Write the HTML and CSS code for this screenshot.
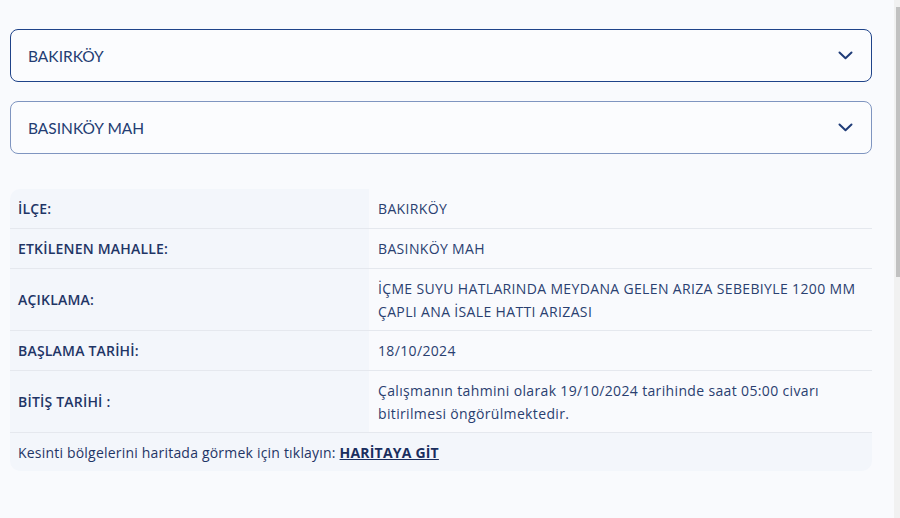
FILE: index.html
```html
<!DOCTYPE html>
<html lang="tr">
<head>
<meta charset="utf-8">
<link rel="stylesheet" href="styles.css">
</head>
<body>
<div class="page">
  <div class="select select-first">
    <span class="select-text">BAKIRKÖY</span>
    <svg class="chev" width="15" height="9" viewBox="0 0 15 9"><path d="M1.5 1.5 L7.5 7.2 L13.5 1.5" fill="none" stroke="#1f3c78" stroke-width="2" stroke-linecap="round" stroke-linejoin="round"/></svg>
  </div>
  <div class="select select-second">
    <span class="select-text">BASINKÖY MAH</span>
    <svg class="chev" width="15" height="9" viewBox="0 0 15 9"><path d="M1.5 1.5 L7.5 7.2 L13.5 1.5" fill="none" stroke="#1f3c78" stroke-width="2" stroke-linecap="round" stroke-linejoin="round"/></svg>
  </div>

  <div class="info">
    <div class="row short">
      <div class="label">İLÇE:</div>
      <div class="value">BAKIRKÖY</div>
    </div>
    <div class="row short">
      <div class="label">ETKİLENEN MAHALLE:</div>
      <div class="value">BASINKÖY MAH</div>
    </div>
    <div class="row tall">
      <div class="label">AÇIKLAMA:</div>
      <div class="value">İÇME SUYU HATLARINDA MEYDANA GELEN ARIZA SEBEBIYLE 1200 MM ÇAPLI ANA İSALE HATTI ARIZASI</div>
    </div>
    <div class="row short">
      <div class="label">BAŞLAMA TARİHİ:</div>
      <div class="value">18/10/2024</div>
    </div>
    <div class="row tall">
      <div class="label">BİTİŞ TARİHİ :</div>
      <div class="value">Çalışmanın tahmini olarak 19/10/2024 tarihinde saat 05:00 civarı bitirilmesi öngörülmektedir.</div>
    </div>
    <div class="footer">Kesinti bölgelerini haritada görmek için tıklayın: <a class="map-link" href="#">HARİTAYA GİT</a></div>
  </div>
</div>
<div class="scrollbar"><div class="scroll-thumb"></div></div>
</body>
</html>
```
FILE: styles.css
```css
html {
  background: #f9fafd;
}
body {
  margin: 0;
  font-family: "Open Sans", "Noto Sans", sans-serif;
  color: #213a6e;
}
.page {
  padding: 29px 28px 0 10px;
  display: flex;
  flex-direction: column;
}
.select {
  height: 53px;
  box-sizing: border-box;
  border-radius: 8px;
  background: #fbfcfe;
  display: flex;
  align-items: center;
  justify-content: space-between;
  padding: 0 18px 0 17px;
}
.select-first {
  border: 1px solid #1f4389;
}
.select-second {
  border: 1px solid #7f95c0;
  margin-top: 19px;
}
.select-text {
  font-family: Lato, "Noto Sans", sans-serif;
  font-size: 15.5px;
  color: #243c72;
}
.chev {
  display: block;
}
.info {
  margin-top: 35px;
  border-radius: 10px;
  overflow: hidden;
  font-size: 14px;
  letter-spacing: 0.2px;
}
.row {
  display: grid;
  grid-template-columns: 359px 1fr;
  border-bottom: 1px solid #e5e8ee;
}
.row.short {
  min-height: 39px;
}
.row.tall {
  min-height: 61px;
}
.label {
  background: #f3f6fb;
  font-weight: 600;
  color: #1f3566;
  padding: 0 8px;
  display: flex;
  align-items: center;
}
.value {
  padding: 0 10px 0 9px;
  display: flex;
  align-items: center;
  line-height: 23px;
  color: #2a4070;
  letter-spacing: 0.35px;
}
.footer {
  background: #f3f6fb;
  height: 38px;
  display: flex;
  align-items: center;
  padding: 0 8px;
  color: #1f3566;
  white-space: pre;
}
.map-link {
  color: #1a2e5e;
  font-weight: 700;
  text-decoration: underline;
}
.scrollbar {
  position: fixed;
  top: 0;
  right: 0;
  width: 6px;
  height: 100%;
  background: #f1f1f1;
}
.scroll-thumb {
  position: absolute;
  top: 7px;
  right: 0;
  width: 4px;
  height: 270px;
  background: #c1c1c1;
}
```
